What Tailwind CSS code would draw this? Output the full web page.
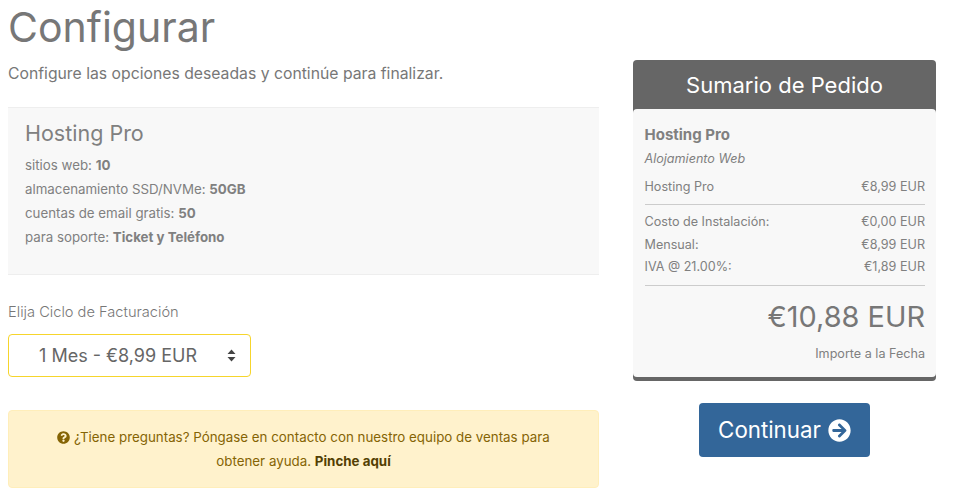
<!DOCTYPE html>
<html lang="en">
  <head>
    <meta charset="UTF-8" />
    <meta name="viewport" content="width=device-width, initial-scale=1.0" />
    <title>Configurar</title>
    <script src="https://cdn.jsdelivr.net/npm/@tailwindcss/browser@4"></script>
  </head>
  <body class="w-[957px] h-[504px] overflow-hidden bg-white font-['Inter',sans-serif] text-[#777777]">
    <div class="flex gap-[34px] px-2">
      <main class="w-[591px]">
        <h1 class="text-[41px] leading-[54px] font-normal">Configurar</h1>
        <p class="mt-[7px] text-[15.75px] leading-[25px] text-[#777777]">Configure las opciones deseadas y continúe para finalizar.</p>

        <section class="mt-[21px] h-[168px] pt-[11px] px-[17px] bg-[#f8f8f8] border-y border-[#eeeeee]">
          <h2 class="text-[21.5px] leading-[28px] text-[#808080]">Hosting Pro</h2>
          <ul class="mt-[6px] text-[13.3px] leading-6 text-[#808080]">
            <li>sitios web: <b class="font-bold">10</b></li>
            <li>almacenamiento SSD/NVMe: <b class="font-bold">50GB</b></li>
            <li>cuentas de email gratis: <b class="font-bold">50</b></li>
            <li>para soporte: <b class="font-bold">Ticket y Teléfono</b></li>
          </ul>
        </section>

        <label class="block mt-[27px] text-[14.65px] font-light leading-5 text-[#777777]">Elija Ciclo de Facturación</label>
        <div class="relative mt-[12px] w-[243px] h-[43px]">
          <select class="w-full h-full pl-[30px] appearance-none bg-white border border-[#f6d52c] rounded text-[18px] text-[#666666]">
            <option>1 Mes - €8,99 EUR</option>
          </select>
          <svg class="absolute right-[15px] top-[15px] w-[9px] h-[13px]" viewBox="0 0 9 13"><path fill="#444444" d="M4.5 0.5 8.5 5H.5zM4.5 12.5 .5 8h8z"/></svg>
        </div>

        <div class="mt-[33px] h-[78px] pt-[14px] px-[20px] bg-[#fff2cc] border border-[#ffeeba] rounded text-center text-[13.35px] leading-6 text-[#856404]">
          <svg class="inline-block w-[13px] h-[13px] align-[-2px]" viewBox="0 0 512 512"><path fill="#856404" d="M504 256c0 136.997-111.043 248-248 248S8 392.997 8 256C8 119.083 119.043 8 256 8s248 111.083 248 248zM262.655 90c-54.497 0-89.255 22.957-116.549 63.758-3.536 5.286-2.353 12.415 2.715 16.258l34.699 26.31c5.205 3.947 12.621 3.008 16.665-2.122 17.864-22.658 30.113-35.797 57.303-35.797 20.429 0 45.698 13.148 45.698 32.958 0 14.976-12.363 22.667-32.534 33.976C247.128 238.528 216 254.941 216 296v4c0 6.627 5.373 12 12 12h56c6.627 0 12-5.373 12-12v-1.333c0-28.462 83.186-29.647 83.186-106.667 0-58.002-60.165-102-116.531-102zM256 338c-25.365 0-46 20.635-46 46 0 25.364 20.635 46 46 46s46-20.636 46-46c0-25.365-20.635-46-46-46z"/></svg>
          ¿Tiene preguntas? Póngase en contacto con nuestro equipo de ventas para<br />obtener ayuda. <b class="font-bold text-[#533f03]">Pinche aquí</b>
        </div>
      </main>

      <aside class="w-[303px] pt-[60px]">
        <div class="bg-[#666666] rounded pb-[4px]">
          <h2 class="h-[49px] text-center text-[22px] leading-[50px] text-white">Sumario de Pedido</h2>
          <div class="h-[268px] pl-[11.5px] pr-[11px] pt-[16px] bg-[#f8f8f8] rounded text-[12.6px] text-[#808080]">
            <p class="text-[15px] leading-5 font-bold">Hosting Pro</p>
            <p class="mt-[4px] italic leading-5">Alojamiento Web</p>
            <div class="flex justify-between mt-[8px] leading-5 pb-[7px] border-b border-[#cccccc]"><span>Hosting Pro</span><span>€8,99 EUR</span></div>
            <div class="flex justify-between mt-[6px] leading-[22px]"><span>Costo de Instalación:</span><span>€0,00 EUR</span></div>
            <div class="flex justify-between leading-[23px]"><span>Mensual:</span><span>€8,99 EUR</span></div>
            <div class="flex justify-between leading-[22px] pb-[7px] border-b border-[#cccccc]"><span>IVA @ 21.00%:</span><span>€1,89 EUR</span></div>
            <p class="mt-[9px] text-right text-[28.9px] leading-[44px] text-[#777777]">€10,88 EUR</p>
            <p class="mt-[5px] text-right leading-5">Importe a la Fecha</p>
          </div>
        </div>
        <div class="flex justify-center mt-[22px]">
          <a href="#" class="flex items-center gap-[7px] h-[54px] w-[171px] justify-center bg-[#336699] rounded text-[22.3px] text-white">
            Continuar
            <svg class="w-[23px] h-[23px]" viewBox="0 0 512 512"><path fill="#ffffff" d="M256 8c137 0 248 111 248 248S393 504 256 504 8 393 8 256 119 8 256 8zm-28.9 143.6l75.5 72.4H120c-13.3 0-24 10.7-24 24v16c0 13.3 10.7 24 24 24h182.6l-75.5 72.4c-9.7 9.3-9.9 24.8-.4 34.3l11 10.9c9.4 9.4 24.6 9.4 33.9 0L404.3 273c9.4-9.4 9.4-24.6 0-33.9L271.6 106.3c-9.4-9.4-24.6-9.4-33.9 0l-11 11c-9.4 9.5-9.2 25 .4 34.3z"/></svg>
          </a>
        </div>
      </aside>
    </div>
  </body>
</html>
